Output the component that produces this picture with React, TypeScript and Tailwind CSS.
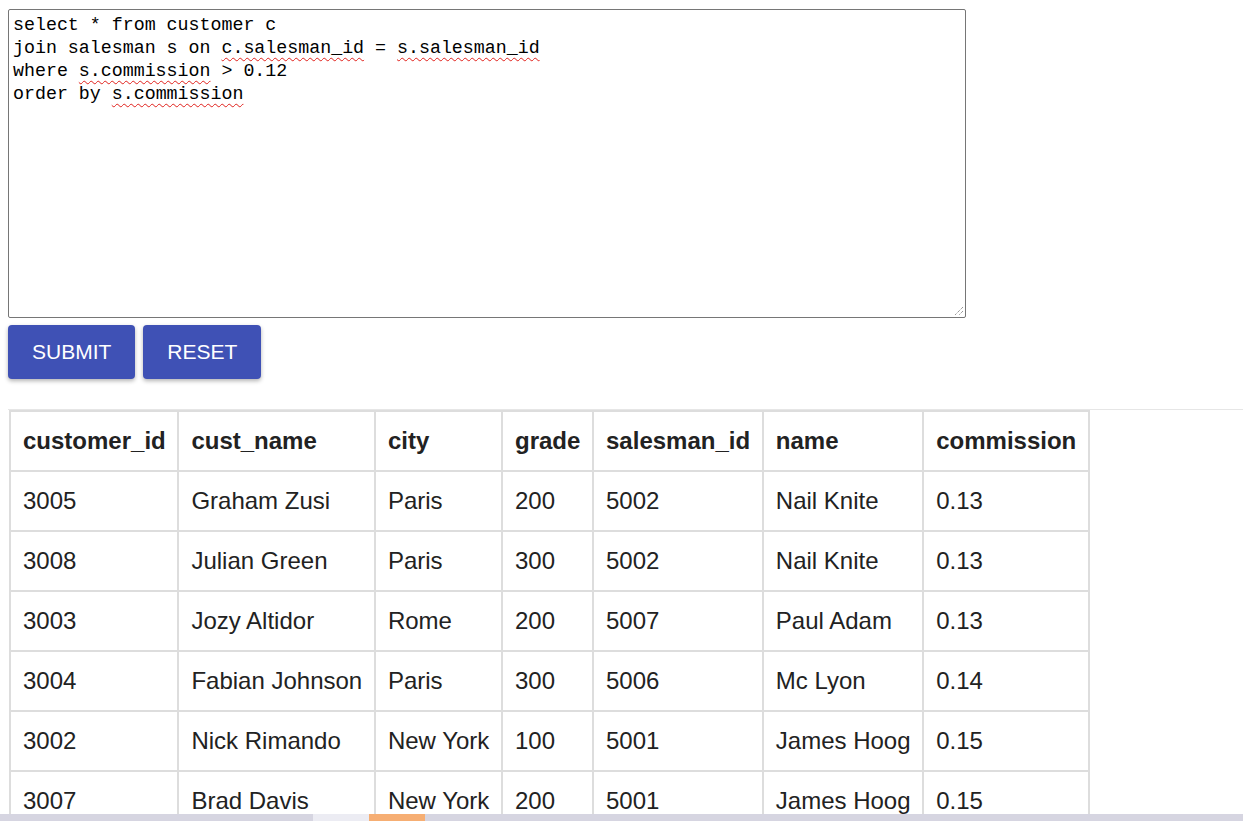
import React, { useState } from 'react';

interface Row {
  customer_id: number;
  cust_name: string;
  city: string;
  grade: number;
  salesman_id: number;
  name: string;
  commission: string;
}

const rows: Row[] = [
  { customer_id: 3005, cust_name: 'Graham Zusi', city: 'Paris', grade: 200, salesman_id: 5002, name: 'Nail Knite', commission: '0.13' },
  { customer_id: 3008, cust_name: 'Julian Green', city: 'Paris', grade: 300, salesman_id: 5002, name: 'Nail Knite', commission: '0.13' },
  { customer_id: 3003, cust_name: 'Jozy Altidor', city: 'Rome', grade: 200, salesman_id: 5007, name: 'Paul Adam', commission: '0.13' },
  { customer_id: 3004, cust_name: 'Fabian Johnson', city: 'Paris', grade: 300, salesman_id: 5006, name: 'Mc Lyon', commission: '0.14' },
  { customer_id: 3002, cust_name: 'Nick Rimando', city: 'New York', grade: 100, salesman_id: 5001, name: 'James Hoog', commission: '0.15' },
  { customer_id: 3007, cust_name: 'Brad Davis', city: 'New York', grade: 200, salesman_id: 5001, name: 'James Hoog', commission: '0.15' },
];

const columns = ['customer_id', 'cust_name', 'city', 'grade', 'salesman_id', 'name', 'commission'];

// spell-check squiggle, like the browser draws it
function Sq({ children }: { children: React.ReactNode }) {
  return (
    <span className="underline decoration-wavy decoration-[#e0201b] decoration-1 underline-offset-[4px]">
      {children}
    </span>
  );
}

export default function App() {
  const [query] = useState('');

  return (
    <div className="min-h-screen bg-white pb-10" style={{ fontFamily: '"Liberation Sans", Arial, sans-serif' }}>
      <div className="pl-2 pt-[9px]">
        <div
          className="relative w-[958px] h-[309px] border border-[#767676] rounded-[2px] pl-[4px] pt-[4px] text-[18.3px] leading-[23px] text-black whitespace-pre"
          style={{ fontFamily: '"Liberation Mono", "DejaVu Sans Mono", monospace' }}
          data-query={query}
        >
          <div>select * from customer c</div>
          <div>
            join salesman s on <Sq>c.salesman_id</Sq> = <Sq>s.salesman_id</Sq>
          </div>
          <div>
            where <Sq>s.commission</Sq> &gt; 0.12
          </div>
          <div>
            order by <Sq>s.commission</Sq>
          </div>
          <svg className="absolute right-[1px] bottom-[1px]" width="12" height="12" viewBox="0 0 12 12">
            <path d="M11 3 L3 11 M11 7 L7 11" stroke="#6b6b6b" strokeWidth="1" strokeDasharray="1 1" />
          </svg>
        </div>

        <div className="flex gap-2 mt-[7px]">
          <button className="h-[54px] px-6 rounded-[4px] bg-[#3f51b5] text-white text-[21px] shadow-[0_2px_4px_rgba(0,0,0,0.3)]">
            SUBMIT
          </button>
          <button className="h-[54px] px-6 rounded-[4px] bg-[#3f51b5] text-white text-[21px] shadow-[0_2px_4px_rgba(0,0,0,0.3)]">
            RESET
          </button>
        </div>
      </div>

      <div className="mt-[30px] ml-2 border-t border-[#e6e6e6]">
        <table className="border-collapse text-[24px] text-[#222] ml-[1px]">
          <thead>
            <tr>
              {columns.map((c) => (
                <th key={c} className="border-2 border-[#dddddd] pl-3 pr-[11.7px] py-4 text-left font-bold leading-[26px]">
                  {c}
                </th>
              ))}
            </tr>
          </thead>
          <tbody>
            {rows.map((r) => (
              <tr key={r.customer_id}>
                <td className="border-2 border-[#dddddd] pl-3 pr-[11.7px] py-4 leading-[26px]">{r.customer_id}</td>
                <td className="border-2 border-[#dddddd] pl-3 pr-[11.7px] py-4 leading-[26px]">{r.cust_name}</td>
                <td className="border-2 border-[#dddddd] pl-3 pr-[11.7px] py-4 leading-[26px]">{r.city}</td>
                <td className="border-2 border-[#dddddd] pl-3 pr-[11.7px] py-4 leading-[26px]">{r.grade}</td>
                <td className="border-2 border-[#dddddd] pl-3 pr-[11.7px] py-4 leading-[26px]">{r.salesman_id}</td>
                <td className="border-2 border-[#dddddd] pl-3 pr-[11.7px] py-4 leading-[26px]">{r.name}</td>
                <td className="border-2 border-[#dddddd] pl-3 pr-[11.7px] py-4 leading-[26px]">{r.commission}</td>
              </tr>
            ))}
          </tbody>
        </table>
      </div>

      {/* bottom strip */}
      <div className="fixed left-0 right-0 bottom-0 h-[7px] bg-[#d6d5e1] flex">
        <div className="w-[313px]" />
        <div className="w-[56px] bg-[#ececf3]" />
        <div className="w-[56px] bg-[#f6ae73]" />
      </div>
    </div>
  );
}
